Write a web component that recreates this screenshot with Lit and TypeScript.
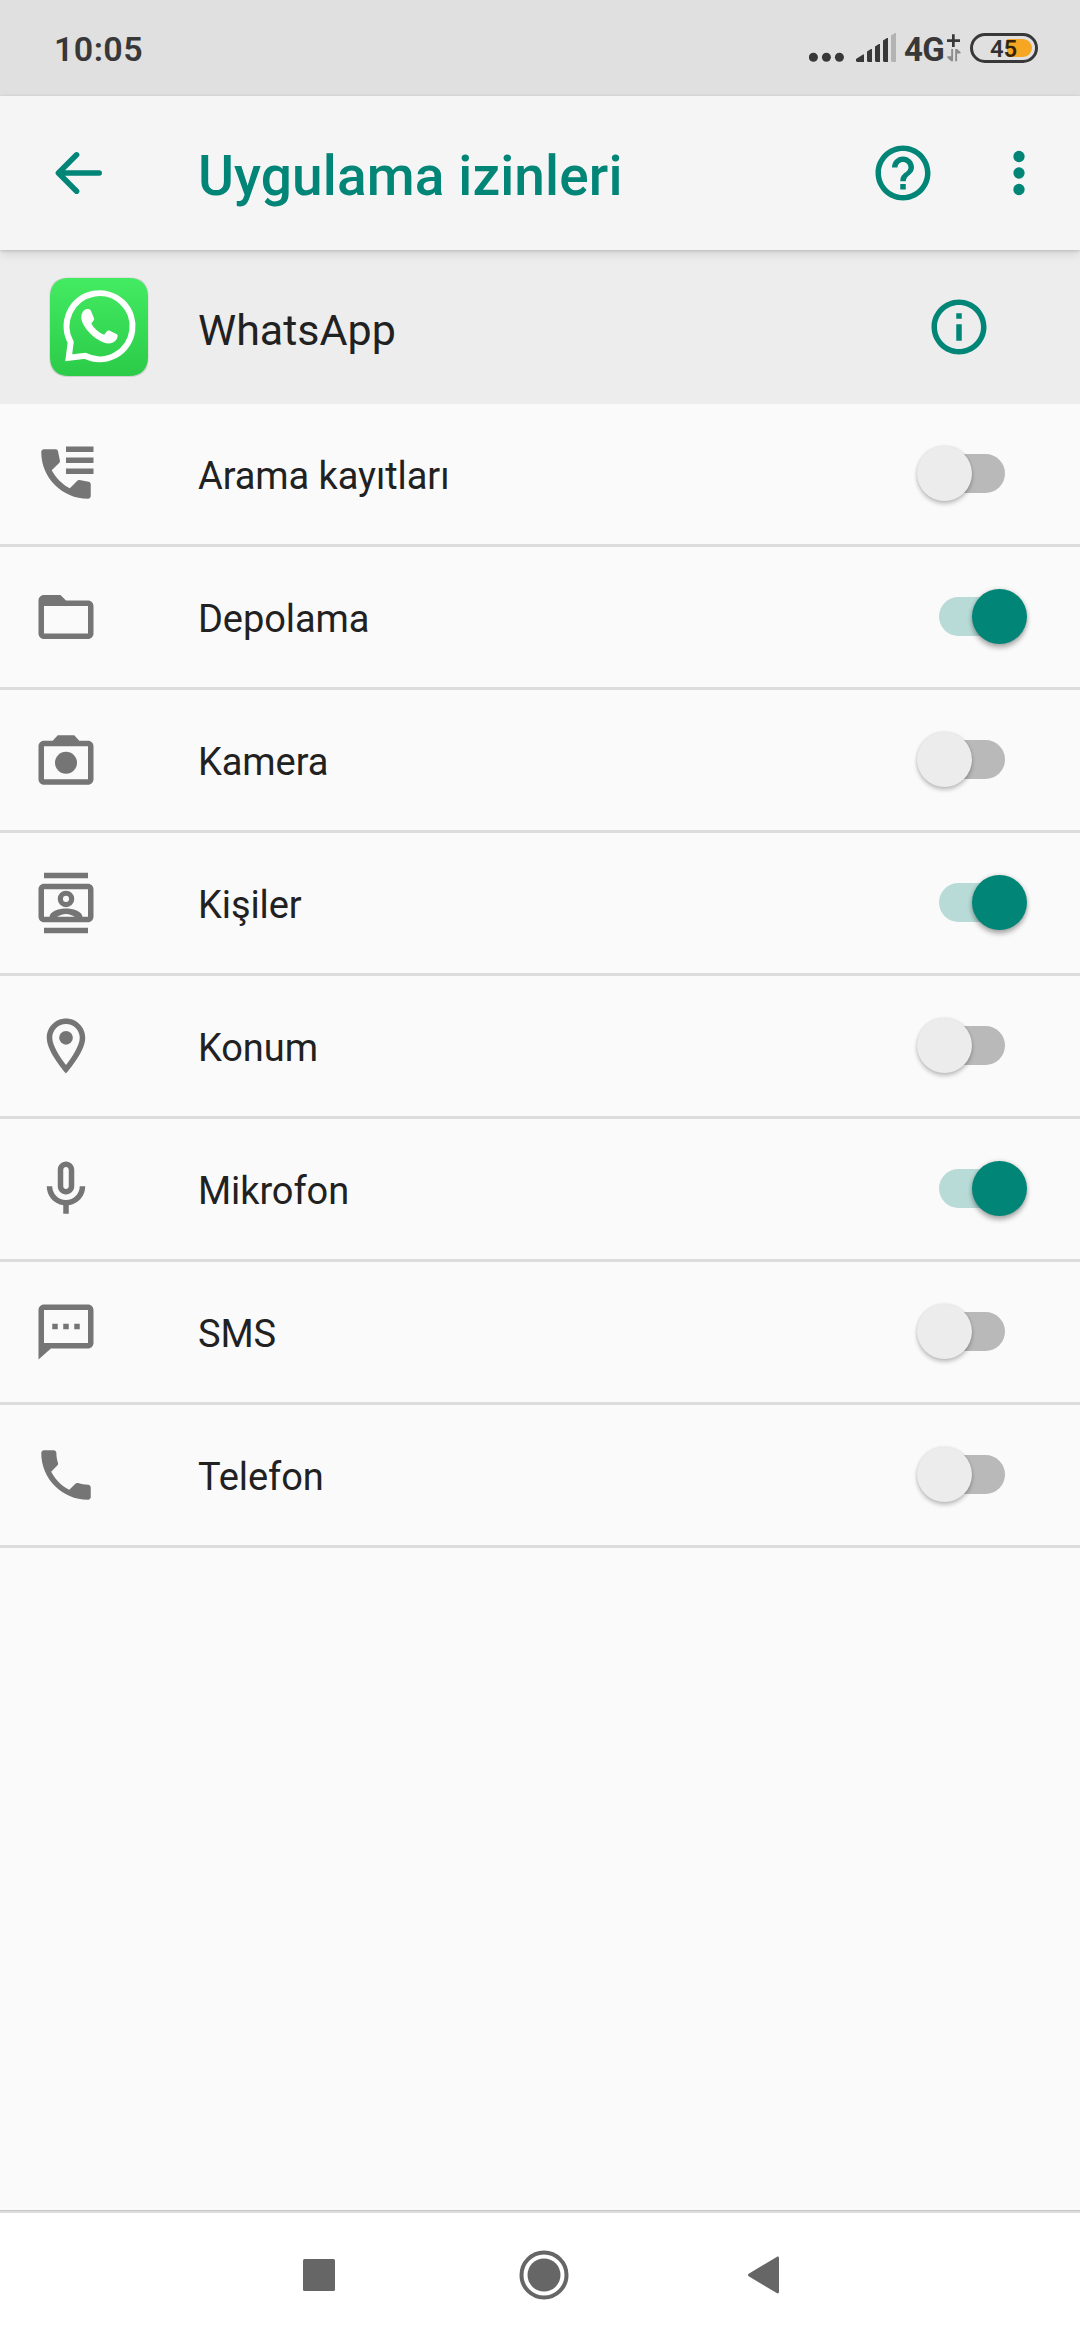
import { LitElement, html, css, svg, type SVGTemplateResult } from "lit";
import { customElement, property, state } from "lit/decorators.js";
import { classMap } from "lit/directives/class-map.js";

type IconName =
  | "callLog" | "folder" | "camera" | "contacts"
  | "location" | "mic" | "sms" | "phone" | "help" | "info" | "more";

/* Glyphs on a 24-unit grid. */
const ICONS: Record<IconName, SVGTemplateResult> = {
  callLog: svg`<path d="M4 3h4.2c.5 0 .8.3.9.8l.7 3.4c.05.3 0 .5-.2.7l-2.800 2.700c1.500 2.800 3.800 5.100 6.600 6.600l2.700-2.750c.2-.2.5-.3.8-.25l3.300.6c.5.1.8.5.8.95V20c0 .55-.45 1-1 1C10.600 21 3 13.400 3 4c0-.55.45-1 1-1z"/><path d="M12 2h10v2H12zM12 6h10v2H12zM12 10h10v2H12z"/>`,
  folder: svg`<path d="M20 6h-8l-2-2H4c-1.100 0-2 .9-2 2v12c0 1.100.9 2 2 2h16c1.100 0 2-.9 2-2V8c0-1.100-.9-2-2-2zm0 12H4V8h16v10z"/>`,
  camera: svg`<path d="M20 5h-3.170L15 3H9L7.170 5H4c-1.100 0-2 .9-2 2v12c0 1.100.9 2 2 2h16c1.100 0 2-.9 2-2V7c0-1.100-.9-2-2-2zm0 14H4V7h16v12z"/><circle cx="12" cy="13" r="4"/>`,
  contacts: svg`<path d="M4 1h16v2H4zM4 21h16v2H4z"/><path fill-rule="evenodd" d="M4 5h16c1.100 0 2 .9 2 2v10c0 1.100-.9 2-2 2H4c-1.100 0-2-.9-2-2V7c0-1.100.9-2 2-2zM4 7v10h16V7z"/><path fill-rule="evenodd" d="M12 7.500a3 3 0 1 0 0 6 3 3 0 0 0 0-6zM12 9.400a1.100 1.100 0 1 1 0 2.200 1.100 1.100 0 0 1 0-2.200z"/><path d="M12 14c2.300 0 6 .9 6 3.200h-2.600c-.8-.7-2.300-1.200-3.400-1.200s-2.600.5-3.400 1.200H6c0-2.300 3.700-3.200 6-3.200z"/>`,
  location: svg`<path d="M12 2C8.130 2 5 5.130 5 9c0 5.250 7 13 7 13s7-7.750 7-13c0-3.870-3.130-7-7-7zM7 9c0-2.760 2.240-5 5-5s5 2.240 5 5c0 2.880-2.880 7.190-5 9.880C9.920 16.210 7 11.850 7 9z"/><circle cx="12" cy="9" r="2.500"/>`,
  mic: svg`<path d="M12 14c1.660 0 3-1.340 3-3V5c0-1.660-1.340-3-3-3S9 3.340 9 5v6c0 1.660 1.340 3 3 3zm-1-9c0-.55.45-1 1-1s1 .45 1 1v6c0 .55-.45 1-1 1s-1-.45-1-1V5z"/><path d="M17 11c0 2.760-2.240 5-5 5s-5-2.240-5-5H5c0 3.530 2.610 6.430 6 6.920V21h2v-3.080c3.390-.49 6-3.390 6-6.920h-2z"/>`,
  sms: svg`<path fill-rule="evenodd" d="M4 2h16c1.100 0 2 .9 2 2v12c0 1.100-.9 2-2 2H6.500L2 22V4c0-1.100.9-2 2-2zM4 4v12h16V4z"/><path d="M7 9h2v2H7zM11 9h2v2h-2zM15 9h2v2h-2z"/>`,
  phone: svg`<path d="M6.620 10.790c1.440 2.830 3.760 5.140 6.590 6.590l2.200-2.200c.27-.27.67-.36 1.020-.24 1.120.37 2.330.57 3.570.57.55 0 1 .45 1 1V20c0 .55-.45 1-1 1-9.390 0-17-7.610-17-17 0-.55.45-1 1-1h3.500c.55 0 1 .45 1 1 0 1.250.2 2.450.57 3.570.11.35.03.74-.25 1.020l-2.200 2.200z"/>`,
  help: svg`<path d="M11 18h2v-2h-2v2zm1-16C6.480 2 2 6.480 2 12s4.480 10 10 10 10-4.480 10-10S17.520 2 12 2zm0 18c-4.410 0-8-3.590-8-8s3.590-8 8-8 8 3.590 8 8-3.590 8-8 8zm0-14c-2.210 0-4 1.790-4 4h2c0-1.100.9-2 2-2s2 .9 2 2c0 2-3 1.750-3 5h2c0-2.250 3-2.500 3-5 0-2.210-1.790-4-4-4z"/>`,
  info: svg`<path d="M11 7h2v2h-2zm0 4h2v6h-2zm1-9C6.480 2 2 6.480 2 12s4.480 10 10 10 10-4.480 10-10S17.520 2 12 2zm0 18c-4.410 0-8-3.590-8-8s3.590-8 8-8 8 3.590 8 8-3.590 8-8 8z"/>`,
  more: svg`<circle cx="12" cy="6" r="2.050"/><circle cx="12" cy="12" r="2.050"/><circle cx="12" cy="18" r="2.050"/>`,
};

@customElement("glyph-icon")
export class GlyphIcon extends LitElement {
  @property() name: IconName = "info";

  static styles = css`
    :host { display: block; flex: none; width: 66px; height: 66px; }
    .glyph { display: block; width: 100%; height: 100%; fill: currentColor; }
  `;

  render() {
    return html`<svg class="glyph" viewBox="0 0 24 24" aria-hidden="true">${ICONS[this.name]}</svg>`;
  }
}

@customElement("status-bar")
export class StatusBar extends LitElement {
  static styles = css`
    :host {
      display: flex; flex: none; align-items: center; box-sizing: border-box;
      height: 96px; padding: 0 42px 0 54px;
      background: #e0e0e0; color: #383838;
    }
    .time { flex: 1; padding-top: 1px; font-size: 34px; line-height: 40px; font-weight: 600; letter-spacing: 0.4px; }
    .signal { display: block; flex: none; margin-right: 8px; }
    .network { flex: none; width: 43px; padding-top: 3px; font-size: 33px; line-height: 40px; font-weight: 700; letter-spacing: -0.6px; }
    .traffic { display: block; flex: none; margin-right: 9px; }
    .battery {
      position: relative; flex: none; box-sizing: border-box;
      width: 68px; height: 30px; border: 3px solid #383838; border-radius: 15px;
      display: flex; align-items: center; justify-content: flex-end; padding: 3px;
    }
    .charge { width: 25px; height: 18px; background: #f6a623; border-radius: 0 9px 9px 0; }
    .level {
      position: absolute; left: 17px; top: -1px;
      font-size: 24px; line-height: 28px; font-weight: 600; color: rgba(0, 0, 0, 0.78);
      letter-spacing: -0.3px;
    }
  `;

  render() {
    return html`
      <div class="time">10:05</div>
      <svg class="signal" width="87" height="96" viewBox="809 0 87 96">
        <g fill="#383838">
          <circle cx="813.4" cy="57.300" r="4.500"/>
          <circle cx="826.4" cy="57.300" r="4.500"/>
          <circle cx="839.4" cy="57.300" r="4.500"/>
          <path d="M856 61V59L863 54.500H864V62H857z"/>
          <path d="M867 61V51.500L871 49H872V62H868z"/>
          <path d="M875 61V46.500L879 44H880V62H876z"/>
          <path d="M883 61V40.500L887 38H888V62H884z"/>
        </g>
        <path fill="#b3b3b3" d="M891 61V35.500L895 33H896V62H892z"/>
      </svg>
      <div class="network">4G</div>
      <svg class="traffic" width="14" height="96" viewBox="947 0 14 96">
        <path fill="#383838" d="M952 34.300h2.700v5h5.300v2.700h-5.300v5h-2.700v-5H947v-2.700h5z"/>
        <path fill="#8c8c8c" d="M951.200 49h1.900v12.200h-1.900L947.300 57.800v-1.500h3.900zM955.200 61.200h1.900V53.500H960.500v-1.500L957.100 49h-1.900z"/>
      </svg>
      <div class="battery"><div class="charge"></div><span class="level">45</span></div>
    `;
  }
}

@customElement("tool-bar")
export class ToolBar extends LitElement {
  static styles = css`
    :host {
      display: flex; flex: none; align-items: center; box-sizing: border-box;
      height: 154px; padding: 0 28px 0 55px; position: relative; z-index: 1;
      background: #f5f5f5; color: #008577;
      box-shadow: 0 1px 3px rgba(0, 0, 0, 0.16), 0 4px 10px rgba(0, 0, 0, 0.1);
    }
    .back { display: block; flex: none; margin-right: 95px; }
    .title { flex: 1; margin: 0; padding-top: 6px; font-size: 55px; line-height: 64px; font-weight: 500; letter-spacing: 0.12px; }
    .actions { display: flex; gap: 50px; }
  `;

  render() {
    return html`
      <svg class="back" width="48" height="44" viewBox="0 0 48 44" fill="none"
        stroke="currentColor" stroke-width="5.500" stroke-linecap="round" stroke-linejoin="round">
        <path d="M21.600 3.800 3.400 22 21.600 40.200M4 22H44.200"/>
      </svg>
      <h1 class="title">Uygulama izinleri</h1>
      <div class="actions">
        <glyph-icon name="help"></glyph-icon>
        <glyph-icon name="more"></glyph-icon>
      </div>
    `;
  }
}

@customElement("app-header")
export class AppHeader extends LitElement {
  static styles = css`
    :host {
      display: flex; flex: none; align-items: center; box-sizing: border-box;
      height: 154px; padding: 0 88px 0 49px;
      background: #ededed; color: #212121;
    }
    .logo { display: block; flex: none; margin-right: 49px; }
    .name { flex: 1; padding-top: 5px; font-size: 43px; line-height: 52px; }
    .info { color: #008577; }
  `;

  render() {
    return html`
      <svg class="logo" width="100" height="100" viewBox="-1 -1 100 100">
        <defs>
          <linearGradient id="green" x1="0" y1="0" x2="0" y2="1">
            <stop offset="0" stop-color="#43eb62"/>
            <stop offset="1" stop-color="#2bcb48"/>
          </linearGradient>
        </defs>
        <path fill="#000" fill-opacity=".12" d="M18-.6H80C92-.6 98.500 6 98.500 18V80.500C98.500 92.500 92 99 80 99H18C6 99-.6 92.500-.6 80.500V18C-.6 6 6-.6 18-.6z"/>
        <path fill="url(#green)" d="M19 0H79C91 0 98 7 98 19V79C98 91 91 98 79 98H19C7 98 0 91 0 79V19C0 7 7 0 19 0z"/>
        <path fill="none" stroke="#fff" stroke-width="6" stroke-linejoin="miter"
          d="M20.700 64.200 18.700 79.800 35 77.800A33 33 0 1 0 20.700 64.200z"/>
        <path fill="#fff" d="M36 31.300c2-.5 4.200-.3 5 1.700l3 7.200c.4 1 .1 1.700-.4 2.400l-2.300 2.900c2.500 4.800 7 8.900 12.800 11.200l3-3.600c.6-.7 1.300-.9 2.100-.5l7.200 3.500c.9.4 1.300.9 1.200 2-.3 4.500-4.500 7.400-8.900 7.300C46 64.300 31.400 48.500 31.300 39.400c0-3.500 1.500-7 4.700-8.100z"/>
      </svg>
      <div class="name">WhatsApp</div>
      <glyph-icon class="info" name="info"></glyph-icon>
    `;
  }
}

@customElement("toggle-switch")
export class ToggleSwitch extends LitElement {
  @property({ type: Boolean }) on = false;

  static styles = css`
    :host { display: block; flex: none; width: 110px; height: 56px; }
    .switch { display: flex; align-items: center; height: 55px; padding-left: 8px; }
    .switch.on { padding-left: 22px; }
    .track {
      display: flex; align-items: center; width: 80px; height: 39px;
      border-radius: 20px; background: #b9b9b9;
    }
    .on .track { background: #b8dbd7; justify-content: flex-end; }
    .knob {
      flex: none; width: 55px; height: 55px; margin: 0 -8px; border-radius: 50%;
      background: #ececec;
      box-shadow: 0 3px 4px rgba(0, 0, 0, 0.22), 0 0 3px rgba(0, 0, 0, 0.12);
    }
    .on .knob {
      background: #008577;
      box-shadow: 0 4px 5px rgba(0, 0, 0, 0.28), 0 0 4px rgba(0, 0, 0, 0.16);
    }
  `;

  render() {
    return html`
      <div class=${classMap({ switch: true, on: this.on })} role="switch" aria-checked=${this.on}>
        <div class="track"><div class="knob"></div></div>
      </div>
    `;
  }
}

@customElement("nav-bar")
export class NavBar extends LitElement {
  static styles = css`
    :host {
      display: flex; flex: none; align-items: center; box-sizing: border-box;
      height: 130px; padding: 0 301px 1px 303px;
      background: #fff; border-top: 1px solid #c5c7c6;
      box-shadow: inset 0 2px 0 #dcdcdc;
      justify-content: space-between;
    }
    .key { display: block; fill: #666; }
    .ring { fill: none; stroke: #666; stroke-width: 4; }
    .home { margin-right: -4px; }
  `;

  render() {
    return html`
      <svg class="key" width="32" height="32" viewBox="0 0 32 32"><rect width="32" height="32" rx="1.500"/></svg>
      <svg class="key home" width="50" height="50" viewBox="0 0 50 50">
        <circle class="ring" cx="25" cy="25" r="22.500"/><circle cx="25" cy="25" r="16.500"/>
      </svg>
      <svg class="key" width="31" height="38" viewBox="0 0 31 38">
        <path d="M.7 17.700 28.700.9C29.800.2 31 .8 31 2V36c0 1.200-1.200 1.800-2.300 1.100L.7 20.300C-.2 19.700-.2 18.300.7 17.700z"/>
      </svg>
    `;
  }
}

interface Permission { icon: IconName; label: string; granted: boolean; }

@customElement("app-root")
export class AppRoot extends LitElement {
  @state() private permissions: Permission[] = [
    { icon: "callLog", label: "Arama kayıtları", granted: false },
    { icon: "folder", label: "Depolama", granted: true },
    { icon: "camera", label: "Kamera", granted: false },
    { icon: "contacts", label: "Kişiler", granted: true },
    { icon: "location", label: "Konum", granted: false },
    { icon: "mic", label: "Mikrofon", granted: true },
    { icon: "sms", label: "SMS", granted: false },
    { icon: "phone", label: "Telefon", granted: false },
  ];

  static styles = css`
    :host {
      display: flex; flex-direction: column; width: 1080px; height: 2340px;
      overflow: hidden; background: #fafafa;
      font-family: Roboto, "Noto Sans", sans-serif;
    }
    .list { flex: 1; margin: 0; padding: 0; list-style: none; }
    .row {
      display: flex; align-items: center; height: 140px; padding: 0 53px 0 33px;
      border-bottom: 3px solid #dcdcdc;
    }
    .icon { margin-right: 99px; color: #757575; }
    .label { flex: 1; padding-top: 4px; font-size: 38px; line-height: 46px; color: #212121; letter-spacing: -0.08px; }
  `;

  private toggle(index: number) {
    this.permissions = this.permissions.map((p, i) => (i === index ? { ...p, granted: !p.granted } : p));
  }

  render() {
    return html`
      <status-bar></status-bar>
      <tool-bar></tool-bar>
      <app-header></app-header>
      <ul class="list">
        ${this.permissions.map((p, i) => html`
          <li class="row" @click=${() => this.toggle(i)}>
            <glyph-icon class="icon" name=${p.icon}></glyph-icon>
            <span class="label">${p.label}</span>
            <toggle-switch ?on=${p.granted}></toggle-switch>
          </li>
        `)}
      </ul>
      <nav-bar></nav-bar>
    `;
  }
}
